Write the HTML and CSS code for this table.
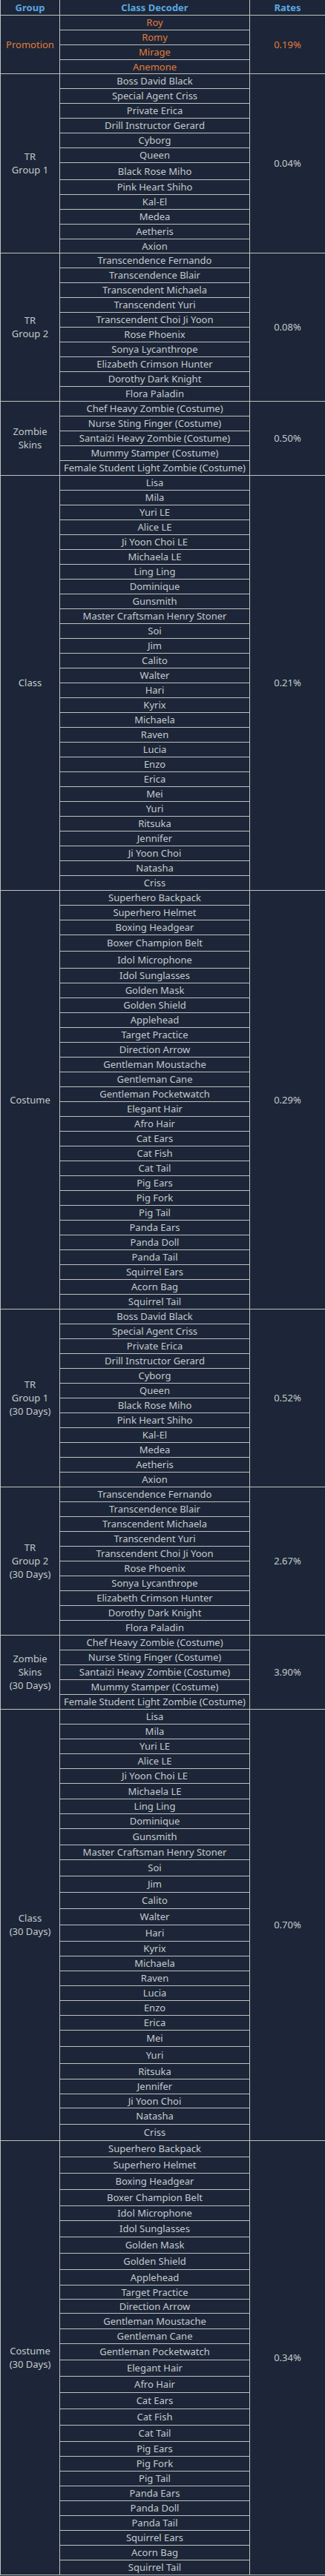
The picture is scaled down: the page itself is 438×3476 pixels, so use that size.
FILE: index.html
```html
<!DOCTYPE html>
<html>
<head>
<meta charset="utf-8">
<link rel="stylesheet" href="styles.css">
</head>
<body>
<table class="rates">
<colgroup><col class="c-group"><col class="c-item"><col class="c-rate"></colgroup>
<thead>
<tr class="head"><th>Group</th><th>Class Decoder</th><th>Rates</th></tr>
</thead>
<tbody>
<tr class="promo"><td rowspan="4" class="grp">Promotion</td><td>Roy</td><td rowspan="4" class="rate">0.19%</td></tr>
<tr class="promo"><td>Romy</td></tr>
<tr class="promo"><td>Mirage</td></tr>
<tr class="promo h19"><td>Anemone</td></tr>

<tr><td rowspan="12" class="grp">TR<br>Group 1</td><td>Boss David Black</td><td rowspan="12" class="rate">0.04%</td></tr>
<tr><td>Special Agent Criss</td></tr>
<tr><td>Private Erica</td></tr>
<tr><td>Drill Instructor Gerard</td></tr>
<tr><td>Cyborg</td></tr>
<tr><td>Queen</td></tr>
<tr class="h23"><td>Black Rose Miho</td></tr>
<tr><td>Pink Heart Shiho</td></tr>
<tr><td>Kal-El</td></tr>
<tr><td>Medea</td></tr>
<tr><td>Aetheris</td></tr>
<tr class="h19"><td>Axion</td></tr>

<tr><td rowspan="10" class="grp">TR<br>Group 2</td><td>Transcendence Fernando</td><td rowspan="10" class="rate">0.08%</td></tr>
<tr><td>Transcendence Blair</td></tr>
<tr><td>Transcendent Michaela</td></tr>
<tr><td>Transcendent Yuri</td></tr>
<tr><td>Transcendent Choi Ji Yoon</td></tr>
<tr><td>Rose Phoenix</td></tr>
<tr><td>Sonya Lycanthrope</td></tr>
<tr><td>Elizabeth Crimson Hunter</td></tr>
<tr><td>Dorothy Dark Knight</td></tr>
<tr><td>Flora Paladin</td></tr>

<tr><td rowspan="5" class="grp">Zombie<br>Skins</td><td>Chef Heavy Zombie (Costume)</td><td rowspan="5" class="rate">0.50%</td></tr>
<tr><td>Nurse Sting Finger (Costume)</td></tr>
<tr><td>Santaizi Heavy Zombie (Costume)</td></tr>
<tr><td>Mummy Stamper (Costume)</td></tr>
<tr><td>Female Student Light Zombie (Costume)</td></tr>

<tr><td rowspan="28" class="grp">Class</td><td>Lisa</td><td rowspan="28" class="rate">0.21%</td></tr>
<tr><td>Mila</td></tr>
<tr><td>Yuri LE</td></tr>
<tr><td>Alice LE</td></tr>
<tr><td>Ji Yoon Choi LE</td></tr>
<tr><td>Michaela LE</td></tr>
<tr><td>Ling Ling</td></tr>
<tr><td>Dominique</td></tr>
<tr><td>Gunsmith</td></tr>
<tr><td>Master Craftsman Henry Stoner</td></tr>
<tr><td>Soi</td></tr>
<tr><td>Jim</td></tr>
<tr><td>Calito</td></tr>
<tr><td>Walter</td></tr>
<tr><td>Hari</td></tr>
<tr><td>Kyrix</td></tr>
<tr><td>Michaela</td></tr>
<tr><td>Raven</td></tr>
<tr><td>Lucia</td></tr>
<tr><td>Enzo</td></tr>
<tr><td>Erica</td></tr>
<tr><td>Mei</td></tr>
<tr><td>Yuri</td></tr>
<tr><td>Ritsuka</td></tr>
<tr><td>Jennifer</td></tr>
<tr><td>Ji Yoon Choi</td></tr>
<tr><td>Natasha</td></tr>
<tr><td>Criss</td></tr>

<tr><td rowspan="28" class="grp">Costume</td><td>Superhero Backpack</td><td rowspan="28" class="rate">0.29%</td></tr>
<tr><td>Superhero Helmet</td></tr>
<tr><td>Boxing Headgear</td></tr>
<tr class="h22"><td>Boxer Champion Belt</td></tr>
<tr class="h23"><td>Idol Microphone</td></tr>
<tr><td>Idol Sunglasses</td></tr>
<tr><td>Golden Mask</td></tr>
<tr><td>Golden Shield</td></tr>
<tr><td>Applehead</td></tr>
<tr><td>Target Practice</td></tr>
<tr><td>Direction Arrow</td></tr>
<tr><td>Gentleman Moustache</td></tr>
<tr><td>Gentleman Cane</td></tr>
<tr><td>Gentleman Pocketwatch</td></tr>
<tr><td>Elegant Hair</td></tr>
<tr><td>Afro Hair</td></tr>
<tr><td>Cat Ears</td></tr>
<tr><td>Cat Fish</td></tr>
<tr><td>Cat Tail</td></tr>
<tr><td>Pig Ears</td></tr>
<tr><td>Pig Fork</td></tr>
<tr><td>Pig Tail</td></tr>
<tr><td>Panda Ears</td></tr>
<tr><td>Panda Doll</td></tr>
<tr><td>Panda Tail</td></tr>
<tr><td>Squirrel Ears</td></tr>
<tr><td>Acorn Bag</td></tr>
<tr><td>Squirrel Tail</td></tr>

<tr><td rowspan="12" class="grp">TR<br>Group 1<br>(30 Days)</td><td>Boss David Black</td><td rowspan="12" class="rate">0.52%</td></tr>
<tr><td>Special Agent Criss</td></tr>
<tr><td>Private Erica</td></tr>
<tr><td>Drill Instructor Gerard</td></tr>
<tr><td>Cyborg</td></tr>
<tr><td>Queen</td></tr>
<tr><td>Black Rose Miho</td></tr>
<tr><td>Pink Heart Shiho</td></tr>
<tr><td>Kal-El</td></tr>
<tr><td>Medea</td></tr>
<tr><td>Aetheris</td></tr>
<tr><td>Axion</td></tr>

<tr><td rowspan="10" class="grp">TR<br>Group 2<br>(30 Days)</td><td>Transcendence Fernando</td><td rowspan="10" class="rate">2.67%</td></tr>
<tr><td>Transcendence Blair</td></tr>
<tr><td>Transcendent Michaela</td></tr>
<tr><td>Transcendent Yuri</td></tr>
<tr><td>Transcendent Choi Ji Yoon</td></tr>
<tr><td>Rose Phoenix</td></tr>
<tr><td>Sonya Lycanthrope</td></tr>
<tr><td>Elizabeth Crimson Hunter</td></tr>
<tr><td>Dorothy Dark Knight</td></tr>
<tr><td>Flora Paladin</td></tr>

<tr><td rowspan="5" class="grp">Zombie<br>Skins<br>(30 Days)</td><td>Chef Heavy Zombie (Costume)</td><td rowspan="5" class="rate">3.90%</td></tr>
<tr><td>Nurse Sting Finger (Costume)</td></tr>
<tr><td>Santaizi Heavy Zombie (Costume)</td></tr>
<tr><td>Mummy Stamper (Costume)</td></tr>
<tr><td>Female Student Light Zombie (Costume)</td></tr>

<tr><td rowspan="28" class="grp">Class<br>(30 Days)</td><td>Lisa</td><td rowspan="28" class="rate">0.70%</td></tr>
<tr><td>Mila</td></tr>
<tr><td>Yuri LE</td></tr>
<tr><td>Alice LE</td></tr>
<tr><td>Ji Yoon Choi LE</td></tr>
<tr class="h21"><td>Michaela LE</td></tr>
<tr><td>Ling Ling</td></tr>
<tr><td>Dominique</td></tr>
<tr class="h22"><td>Gunsmith</td></tr>
<tr><td>Master Craftsman Henry Stoner</td></tr>
<tr class="h22"><td>Soi</td></tr>
<tr class="h22"><td>Jim</td></tr>
<tr class="h22"><td>Calito</td></tr>
<tr class="h22"><td>Walter</td></tr>
<tr class="h22"><td>Hari</td></tr>
<tr><td>Kyrix</td></tr>
<tr><td>Michaela</td></tr>
<tr><td>Raven</td></tr>
<tr><td>Lucia</td></tr>
<tr><td>Enzo</td></tr>
<tr><td>Erica</td></tr>
<tr class="h22"><td>Mei</td></tr>
<tr class="h23"><td>Yuri</td></tr>
<tr class="h21"><td>Ritsuka</td></tr>
<tr><td>Jennifer</td></tr>
<tr class="h19"><td>Ji Yoon Choi</td></tr>
<tr class="h22"><td>Natasha</td></tr>
<tr class="h22"><td>Criss</td></tr>

<tr class="h22"><td rowspan="28" class="grp">Costume<br>(30 Days)</td><td>Superhero Backpack</td><td rowspan="28" class="rate">0.34%</td></tr>
<tr class="h22"><td>Superhero Helmet</td></tr>
<tr class="h22"><td>Boxing Headgear</td></tr>
<tr class="h22"><td>Boxer Champion Belt</td></tr>
<tr><td>Idol Microphone</td></tr>
<tr class="h22"><td>Idol Sunglasses</td></tr>
<tr class="h22"><td>Golden Mask</td></tr>
<tr class="h22"><td>Golden Shield</td></tr>
<tr class="h21"><td>Applehead</td></tr>
<tr class="h19"><td>Target Practice</td></tr>
<tr class="h18"><td>Direction Arrow</td></tr>
<tr class="h21"><td>Gentleman Moustache</td></tr>
<tr><td>Gentleman Cane</td></tr>
<tr class="h22"><td>Gentleman Pocketwatch</td></tr>
<tr class="h22"><td>Elegant Hair</td></tr>
<tr class="h22"><td>Afro Hair</td></tr>
<tr class="h22"><td>Cat Ears</td></tr>
<tr class="h22"><td>Cat Fish</td></tr>
<tr class="h22"><td>Cat Tail</td></tr>
<tr><td>Pig Ears</td></tr>
<tr><td>Pig Fork</td></tr>
<tr><td>Pig Tail</td></tr>
<tr><td>Panda Ears</td></tr>
<tr><td>Panda Doll</td></tr>
<tr><td>Panda Tail</td></tr>
<tr><td>Squirrel Ears</td></tr>
<tr><td>Acorn Bag</td></tr>
<tr><td>Squirrel Tail</td></tr>
</tbody>
</table>
</body>
</html>
```

FILE: styles.css
```css
html, body {
  margin: 0;
  padding: 0;
  background: #1c2638;
}

.rates {
  width: 438px;
  table-layout: fixed;
  border-collapse: collapse;
  font-family: "Noto Sans", "Open Sans", sans-serif;
  font-size: 13px;
  line-height: 18px;
  color: #c6c9cc;
  background: #1c2638;
}

.c-group { width: 80px; }
.c-item { width: 256px; }
.c-rate { width: 102px; }

.rates th,
.rates td {
  border: 1px solid #c0c0c0;
  padding: 0;
  text-align: center;
  vertical-align: middle;
  white-space: nowrap;
}

.rates thead th {
  border-top: none;
  color: #5ba6e0;
  font-weight: bold;
  height: 18px;
}

.rates tr { height: 20px; }
.rates tr.h18 { height: 18px; }
.rates tr.h19 { height: 19px; }
.rates tr.h21 { height: 21px; }
.rates tr.h22 { height: 22px; }
.rates tr.h23 { height: 23px; }

.rates tr.promo td { color: #e27a3a; }
```
